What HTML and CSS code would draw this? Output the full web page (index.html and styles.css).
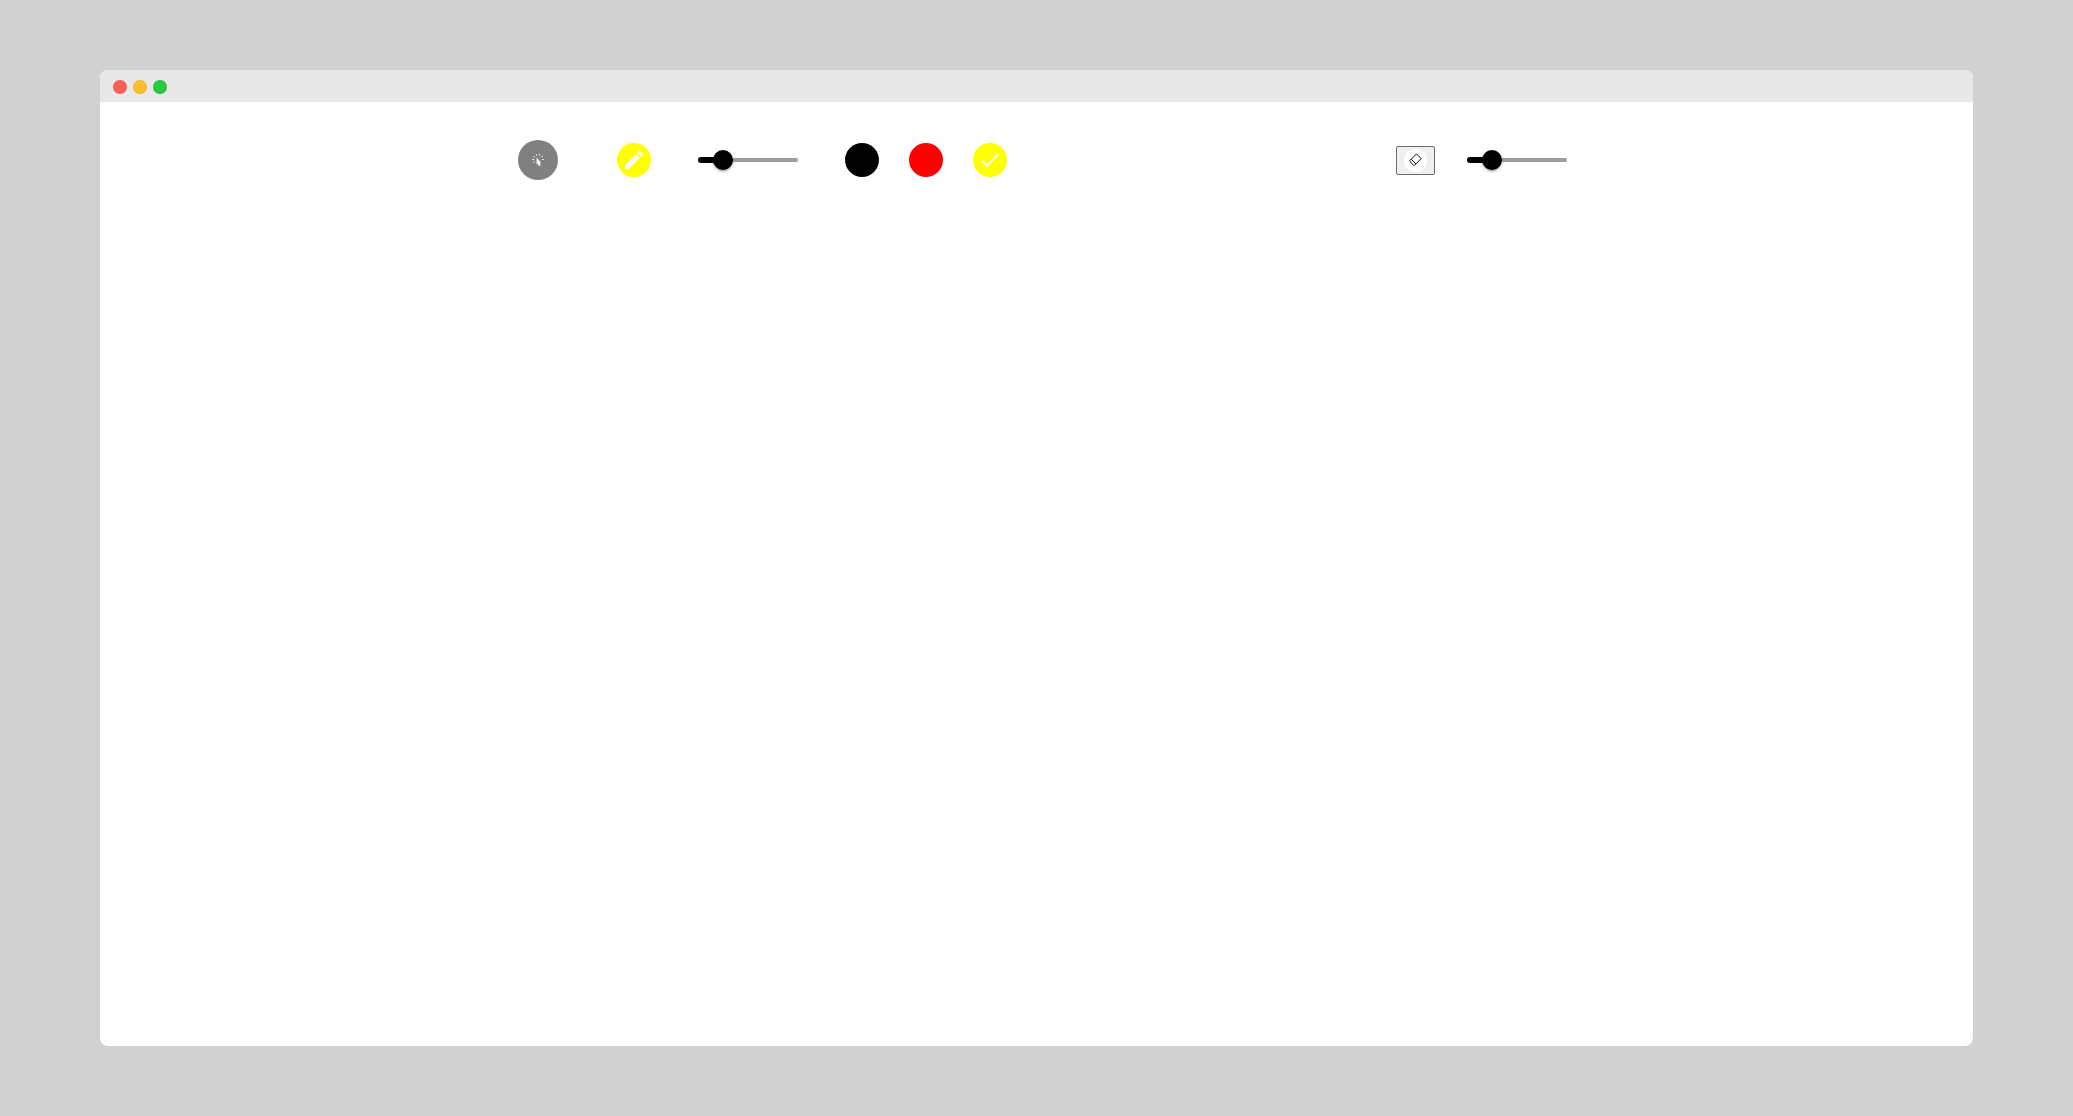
FILE: index.html
```html
<!DOCTYPE html>
<html lang="en">
<head>
  <meta charset="UTF-8" />
  <meta name="viewport" content="width=device-width, initial-scale=1.0" />
  <title>Whiteboard</title>
  <link rel="stylesheet" href="styles.css">
</head>
<body>

  <div class="window">
    <header class="title-bar">
      <span class="dot dot-close"></span>
      <span class="dot dot-minimize"></span>
      <span class="dot dot-zoom"></span>
    </header>

    <main class="board">
      <div class="toolbar">
        <button type="button" class="tool-btn pointer-btn" aria-label="Pointer">
          <svg class="pointer-icon" viewBox="0 0 14 14" aria-hidden="true">
            <path class="rays" d="M5.2 1l.3 1.5M8.8 1l-.3 1.5M2.3 3.2l1.3 1M11.7 3.2l-1.3 1M1.3 6.5h1.6M12.7 6.5h-1.6M2.3 9.8l1.3-1" />
            <path class="arrow" d="M5.6 4.6v7.2l1.4-1.2.9 2.6 1.6-.6-.9-2.3h1.9z" />
          </svg>
        </button>

        <div class="pen-tools">
          <button type="button" class="tool-btn pen-btn" aria-label="Pen">
            <svg class="icon" viewBox="0 0 24 24" aria-hidden="true">
              <path d="M3 17.25V21h3.75L17.81 9.94l-3.75-3.75L3 17.25zM20.71 7.04c.39-.39.39-1.02 0-1.41l-2.34-2.34c-.39-.39-1.02-.39-1.41 0l-1.83 1.83 3.75 3.75 1.83-1.83z" />
            </svg>
          </button>

          <div class="slider">
            <input type="range" min="0" max="100" value="25" aria-label="Pen size" />
          </div>

          <div class="colors" role="radiogroup" aria-label="Pen color">
            <label class="color black">
              <input type="radio" name="color" value="black" aria-label="Black" />
              <svg class="icon" viewBox="0 0 24 24" aria-hidden="true">
                <path d="M9 16.17 4.83 12l-1.42 1.41L9 19 21 7l-1.41-1.41z" />
              </svg>
            </label>
            <label class="color red">
              <input type="radio" name="color" value="red" aria-label="Red" />
              <svg class="icon" viewBox="0 0 24 24" aria-hidden="true">
                <path d="M9 16.17 4.83 12l-1.42 1.41L9 19 21 7l-1.41-1.41z" />
              </svg>
            </label>
            <label class="color yellow">
              <input type="radio" name="color" value="yellow" aria-label="Yellow" checked />
              <svg class="icon" viewBox="0 0 24 24" aria-hidden="true">
                <path d="M9 16.17 4.83 12l-1.42 1.41L9 19 21 7l-1.41-1.41z" />
              </svg>
            </label>
          </div>
        </div>

        <div class="eraser-tools">
          <button type="button" class="eraser-btn" aria-label="Eraser">
            <svg class="eraser-icon" viewBox="0 0 23 23" aria-hidden="true">
              <circle cx="11.5" cy="11.5" r="11.5" />
              <path d="M12.5 4.9 17.2 9.6 10.6 16.2H9.6L5.9 12.5V11.5zM7.2 10.2 11.9 14.9" />
            </svg>
          </button>

          <div class="slider">
            <input type="range" min="0" max="100" value="25" aria-label="Eraser size" />
          </div>
        </div>
      </div>
    </main>
  </div>

  <script>
    // keep the filled part of each track in step with its thumb
    document.querySelectorAll(".slider input").forEach((input) => {
      input.addEventListener("input", () => {
        input.parentElement.style.setProperty("--value", input.value + "%");
      });
    });
  </script>

</body>
</html>
```

FILE: styles.css
```css
* {
  box-sizing: border-box;
}

body {
  margin: 0;
  min-height: 100vh;
  padding: 70px 100px;
  display: flex;
  font-family: "Liberation Sans", sans-serif;
  background-color: #d1d1d1;
}

.window {
  flex: 1;
  display: flex;
  flex-direction: column;
  background-color: #fff;
  border-radius: 8px;
  overflow: hidden;
}

.title-bar {
  display: flex;
  gap: 6px;
  padding: 10px 13px 8px;
  background-color: #e8e8e8;
}

.dot {
  width: 14px;
  height: 14px;
  border: 1px solid rgba(0, 0, 0, 0.05);
  border-radius: 50%;
}

.dot-close {
  background-color: #ff5f57;
}

.dot-minimize {
  background-color: #ffbd2e;
}

.dot-zoom {
  background-color: #28ca41;
}

.board {
  flex: 1;
  padding-top: 38px;
}

.toolbar {
  display: flex;
  align-items: center;
  max-width: 1061px;
  margin: 0 auto;
  padding-left: 12px;
}

.tool-btn {
  display: flex;
  align-items: center;
  justify-content: center;
  padding: 0;
  border: none;
  border-radius: 50%;
  cursor: pointer;
}

.pointer-btn {
  width: 40px;
  height: 40px;
  background-color: #808080;
}

.pointer-icon {
  width: 14px;
  height: 14px;
}

.pointer-icon .rays {
  fill: none;
  stroke: #fff;
  stroke-width: 1;
}

.pointer-icon .arrow {
  fill: #fff;
}

.pen-tools {
  display: flex;
  align-items: center;
  gap: 47px;
  margin-left: 59px;
}

.pen-btn {
  width: 34px;
  height: 34px;
  background-color: yellow;
}

.icon {
  width: 24px;
  height: 24px;
  fill: #fff;
}

/* slider */
.slider {
  --value: 25%;
  position: relative;
  display: flex;
  align-items: center;
  width: 100px;
  height: 20px;
}

.slider::before,
.slider::after {
  content: "";
  position: absolute;
  left: 0;
  border-radius: 12px;
}

.slider::before {
  width: 100%;
  height: 4px;
  background-color: #9e9e9e;
}

.slider::after {
  width: var(--value);
  height: 6px;
  background-color: #000;
}

.slider input {
  appearance: none;
  position: relative;
  z-index: 1;
  flex: none;
  width: calc(100% + 20px);
  height: 20px;
  margin: 0 -10px;
  background: none;
  cursor: pointer;
}

.slider input::-webkit-slider-thumb {
  appearance: none;
  width: 20px;
  height: 20px;
  border-radius: 50%;
  background-color: #000;
  box-shadow: 0 3px 1px -2px rgba(0, 0, 0, 0.2), 0 2px 2px rgba(0, 0, 0, 0.14), 0 1px 5px rgba(0, 0, 0, 0.12);
}

/* colors */
.colors {
  display: flex;
  gap: 30px;
}

.color {
  display: grid;
  place-items: center;
  width: 34px;
  height: 34px;
  border-radius: 50%;
  cursor: pointer;
}

.color input,
.color .icon {
  grid-area: 1 / 1;
}

.color input {
  appearance: none;
  width: 34px;
  height: 34px;
  margin: 0;
  border-radius: 50%;
}

.color .icon {
  visibility: hidden;
  pointer-events: none;
}

.color input:checked + .icon {
  visibility: visible;
}

.black {
  background-color: black;
}

.red {
  background-color: red;
}

.yellow {
  background-color: yellow;
}

/* eraser */
.eraser-tools {
  display: flex;
  align-items: center;
  gap: 32px;
  margin-left: auto;
}

.eraser-btn {
  display: flex;
  padding: 2px 7px;
  border: 1px solid #6b6b6b;
  border-radius: 2px;
  background-color: #efefef;
  cursor: pointer;
}

.eraser-icon {
  width: 23px;
  height: 23px;
}

.eraser-icon circle {
  fill: #fff;
}

.eraser-icon path {
  fill: none;
  stroke: #111;
  stroke-width: 1;
}
```
